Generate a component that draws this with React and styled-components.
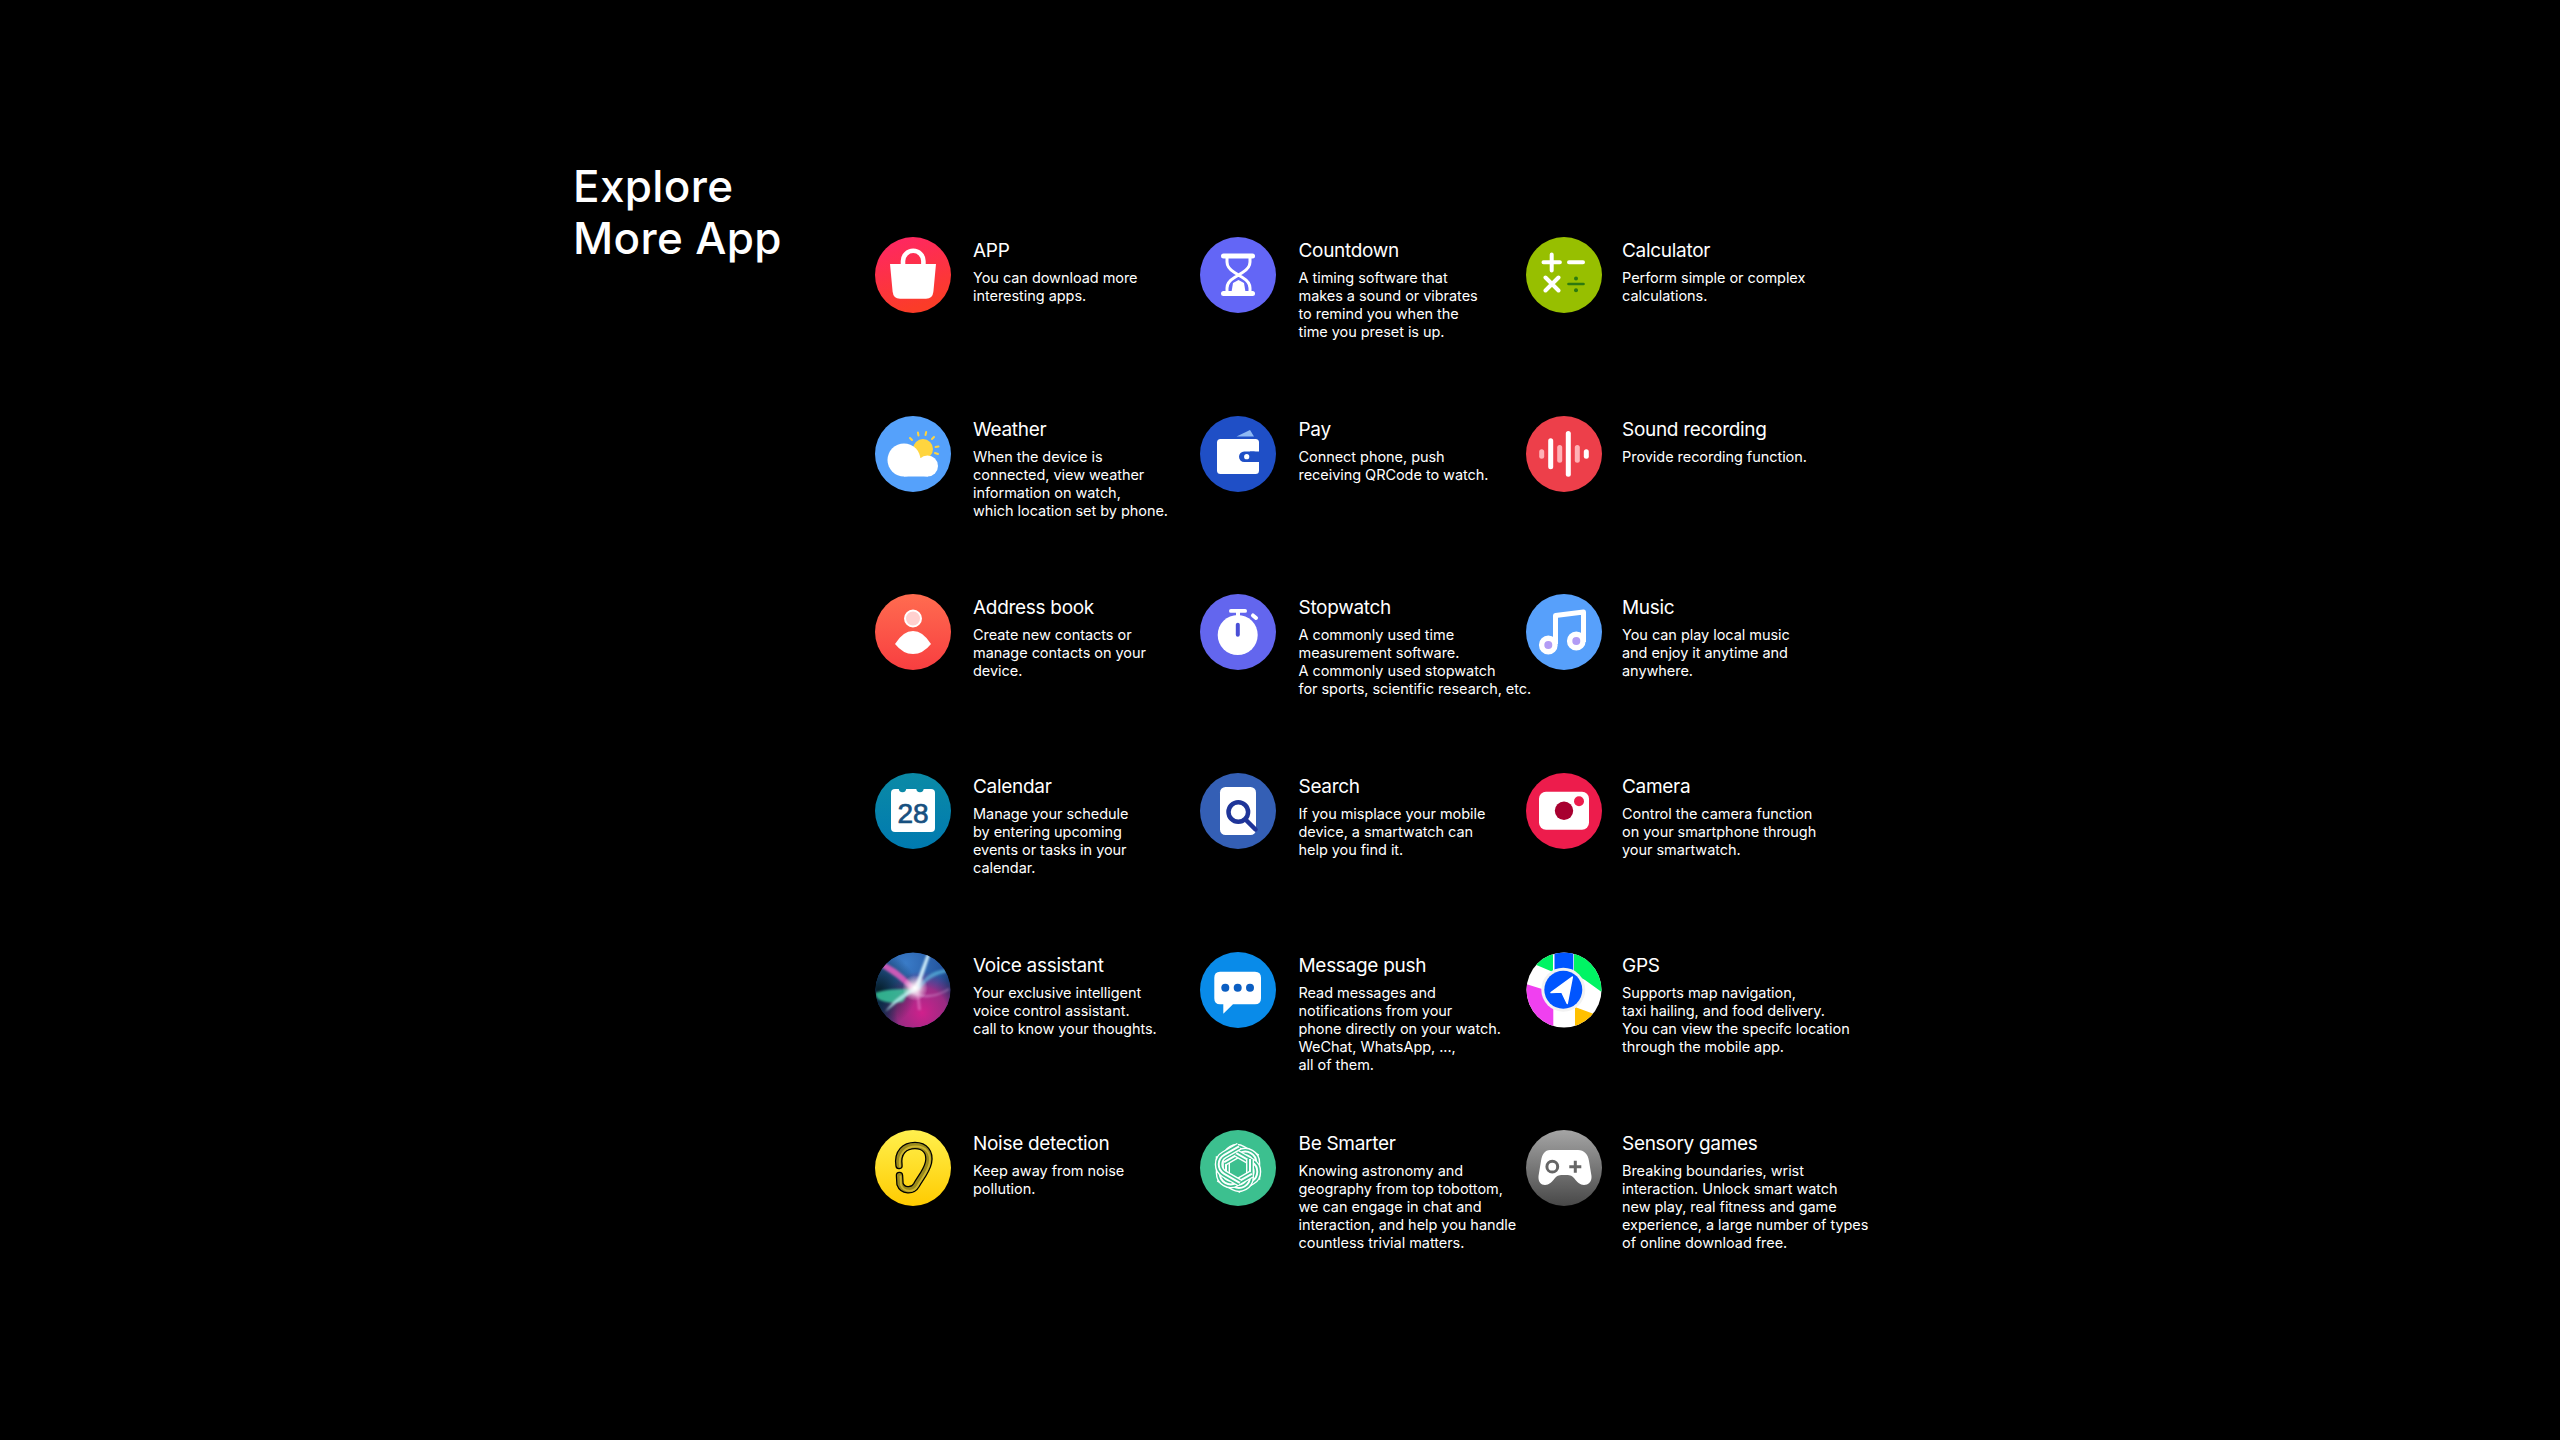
import { createGlobalStyle } from 'styled-components';
import styled from 'styled-components';

const GlobalStyle = createGlobalStyle`
  html, body {
    background: #000;
    margin: 0;
  }
`;

const Page = styled.main`
  background: #000;
  box-sizing: border-box;
  color: #fff;
  display: flex;
  font-family: Inter, 'Liberation Sans', sans-serif;
  height: 1440px;
  padding: 160px 0 0 573px;
  width: 2560px;
`;

const Heading = styled.h1`
  font-size: 44px;
  font-weight: 500;
  letter-spacing: 0.35px;
  line-height: 52px;
  margin: 0;
  width: 302px;
`;

const Grid = styled.section`
  display: grid;
  grid-auto-rows: 178.7px;
  grid-template-columns: 325px 326px 340px;
  padding-top: 77px;
`;

const Item = styled.article`
  align-items: flex-start;
  display: flex;
  gap: ${(props) => props.$gap}px;
`;

const IconBox = styled.svg`
  display: block;
  flex: none;
  height: 76px;
  width: 76px;
`;

const Title = styled.h2`
  font-size: 19px;
  font-weight: 400;
  letter-spacing: -0.3px;
  line-height: 24px;
  margin: 2px 0 6px;
`;

const Desc = styled.p`
  font-size: 14.5px;
  font-weight: 400;
  letter-spacing: -0.05px;
  line-height: 18px;
  margin: 0;
  white-space: pre;
`;

const Disc = ({ id, from, to, x2 = 0 }) => (
  <>
    <defs>
      <linearGradient id={id} x1='0' y1='0' x2={x2} y2='1'>
        <stop offset='0' stopColor={from} />
        <stop offset='1' stopColor={to} />
      </linearGradient>
    </defs>
    <circle cx='38' cy='38' r='38' fill={`url(#${id})`} />
  </>
);

const AppIcon = () => (
  <IconBox viewBox='0 0 76 76'>
    <Disc id='g-app' from='#ff2568' to='#fb3c28' x2='0.3' />
    <path d='M28 28v-4a10.2 10.2 0 0 1 20.4 0v4' fill='none' stroke='#fff' strokeWidth='4.6' />
    <path d='M15 27h46l-2.6 27.5q-.7 7.3-7.4 7.3H25q-6.700 0-7.400-7.300z' fill='#fff' />
  </IconBox>
);

const WeatherIcon = () => (
  <IconBox viewBox='0 0 76 76'>
    <circle cx='38' cy='38' r='38' fill='#55a1fb' />
    <circle cx='48' cy='33' r='10' fill='#ffd53f' />
    <path d='M37 24l-2-2M43.500 19.500l-.6-3M50.500 19l.7-3M57 23l2-2M60.500 31l3-.6M60 37l3 1' stroke='#ffd53f' strokeWidth='2' strokeLinecap='round' />
    <circle cx='29' cy='44' r='16.500' fill='#fff' />
    <circle cx='52.500' cy='50' r='10.500' fill='#fff' />
    <rect x='29' y='42' width='24' height='18.500' fill='#fff' />
  </IconBox>
);

const AddressIcon = () => (
  <IconBox viewBox='0 0 76 76'>
    <Disc id='g-address' from='#ff6c50' to='#f83e40' />
    <circle cx='38' cy='24.500' r='8' fill='#ffd0cf' stroke='#fff' strokeWidth='2' />
    <path d='M20 50q8-13 18-13t18 13q-8 10-18 10t-18-10z' fill='#fff' />
  </IconBox>
);

const CalendarNum = styled.text`
  fill: #17507f;
  font-family: 'Liberation Sans', sans-serif;
  font-size: 28px;
  font-weight: 400;
  stroke: #17507f;
  stroke-width: 0.7px;
  text-anchor: middle;
`;

const CalendarIcon = () => (
  <IconBox viewBox='0 0 76 76'>
    <Disc id='g-calendar' from='#0b8aa6' to='#007ab0' />
    <rect x='16' y='16' width='44' height='43' rx='4' fill='#fff' />
    <circle cx='27.500' cy='15.500' r='3.700' fill='#0a89a7' />
    <circle cx='45' cy='15.500' r='3.700' fill='#0a89a7' />
    <CalendarNum x='38' y='49.500'>28</CalendarNum>
  </IconBox>
);

const VoiceIcon = () => (
  <IconBox viewBox='0 0 76 76'>
    <defs>
      <radialGradient id='g-siri-a' cx='0.4' cy='0.15' r='0.7'>
        <stop offset='0' stopColor='#3a7cc8' />
        <stop offset='0.7' stopColor='#24559f' />
        <stop offset='1' stopColor='#16305e' />
      </radialGradient>
      <radialGradient id='g-siri-b' cx='0.62' cy='0.8' r='0.55'>
        <stop offset='0' stopColor='#d0208c' />
        <stop offset='0.6' stopColor='#a82a86' stopOpacity='0.9' />
        <stop offset='1' stopColor='#7a2a80' stopOpacity='0' />
      </radialGradient>
      <radialGradient id='g-siri-c' cx='0.05' cy='0.5' r='0.5'>
        <stop offset='0' stopColor='#06202c' />
        <stop offset='1' stopColor='#06202c' stopOpacity='0' />
      </radialGradient>
      <radialGradient id='g-siri-d' cx='0.5' cy='0.5' r='0.5'>
        <stop offset='0' stopColor='#fff' />
        <stop offset='0.35' stopColor='#fff' stopOpacity='0.7' />
        <stop offset='1' stopColor='#fff' stopOpacity='0' />
      </radialGradient>
      <filter id='f-siri'>
        <feGaussianBlur stdDeviation='0.8' />
      </filter>
      <clipPath id='c-siri'>
        <circle cx='38' cy='38' r='37.500' />
      </clipPath>
    </defs>
    <g clipPath='url(#c-siri)'>
      <circle cx='38' cy='38' r='38' fill='url(#g-siri-a)' />
      <circle cx='38' cy='38' r='38' fill='url(#g-siri-b)' />
      <circle cx='38' cy='38' r='38' fill='url(#g-siri-c)' />
      <g filter='url(#f-siri)'>
        <path d='M6 15l3-4c10 3 22 14 32 25l-4 3C27 29 16 21 6 15z' fill='#e85cc0' opacity='0.85' />
        <path d='M0 41c10-4 24-4 36-4L28 50C18 52 6 50 2 46z' fill='#3cd0a0' opacity='0.8' />
        <path d='M10 60c8-12 20-20 32-26l3 3C32 43 20 52 10 60z' fill='#b8f0f0' opacity='0.8' />
        <path d='M52 2l3 1L44 36l-5 0z' fill='#d8f6ff' opacity='0.9' />
        <path d='M42 35c8-12 20-18 32-18v3C60 22 52 28 44 38z' fill='#64c8e8' opacity='0.6' />
        <path d='M38 38c10 8 24 6 36-2v2C60 46 46 48 36 41z' fill='#e0b8e8' opacity='0.4' />
        <path d='M40 30l4 8 2 20-3 0z' fill='#e880c8' opacity='0.55' />
      </g>
      <circle cx='40' cy='36' r='13' fill='url(#g-siri-d)' />
    </g>
  </IconBox>
);

const earLine = 'M24 35.500C22 22 30 15.500 40 15.500c10 0 15.500 7 13.500 17-2 9-8.500 16-12 22.500-4 7-14 6-16.500-1l-.5-8.500';

const NoiseIcon = () => (
  <IconBox viewBox='0 0 76 76'>
    <Disc id='g-noise' from='#fff04e' to='#ffcb00' />
    <g fill='none' strokeLinecap='round' strokeLinejoin='round'>
      <path d={earLine} stroke='#000' strokeWidth='7.500' />
      <path d={earLine} stroke='#9a8a1c' strokeWidth='5' />
      <path d={earLine} stroke='#cdb52c' strokeWidth='1.800' transform='translate(1 1)' />
    </g>
  </IconBox>
);

const CountdownIcon = () => (
  <IconBox viewBox='0 0 76 76'>
    <circle cx='38' cy='38' r='38' fill='#6366f6' />
    <rect x='21' y='16.500' width='34' height='5' rx='2.500' fill='#fff' />
    <rect x='21' y='54' width='34' height='5' rx='2.500' fill='#fff' />
    <path d='M27 20v5q0 6 7.500 10.500l4 2.500-4 2.500Q27 45 27 51v4M50 20v5q0 6-7.500 10.500l-4 2.500 4 2.500Q50 45 50 51v4' fill='none' stroke='#fff' strokeWidth='3' />
    <path d='M31.500 55l1.500-9 5.500-3 5.500 3 1.500 9z' fill='#fff' />
  </IconBox>
);

const PayIcon = () => (
  <IconBox viewBox='0 0 76 76'>
    <circle cx='38' cy='38' r='38' fill='#1f4fc6' />
    <path d='M36.500 20.500L50 14l4 6.500z' fill='#8eb9f4' />
    <rect x='17' y='23' width='42' height='35' rx='3.500' fill='#fff' />
    <rect x='39' y='35.500' width='20' height='10.500' rx='5.200' fill='#1f4fc6' />
    <rect x='50' y='35.500' width='9.500' height='10.500' fill='#1f4fc6' />
    <circle cx='46.700' cy='40.700' r='2.600' fill='#fff' />
  </IconBox>
);

const StopwatchIcon = () => (
  <IconBox viewBox='0 0 76 76'>
    <circle cx='38' cy='38' r='38' fill='#6366ee' />
    <rect x='29' y='15' width='18' height='3.800' rx='1.900' fill='#fff' />
    <rect x='36' y='17' width='4' height='6' fill='#fff' />
    <rect x='50.500' y='20.700' width='8' height='4' rx='2' fill='#fff' transform='rotate(40 54.500 22.700)' />
    <circle cx='37.700' cy='41' r='20' fill='#fff' />
    <rect x='35.800' y='28.700' width='4' height='14' rx='2' fill='#4a4fd6' />
  </IconBox>
);

const SearchIcon = () => (
  <IconBox viewBox='0 0 76 76'>
    <circle cx='38' cy='38' r='38' fill='#345fb5' />
    <rect x='20' y='14' width='36' height='48' rx='5.500' fill='#fff' />
    <circle cx='38.300' cy='39' r='9.800' fill='none' stroke='#1f3599' strokeWidth='4.500' />
    <path d='M46 47l9.500 9.500' stroke='#1f3599' strokeWidth='4.500' strokeLinecap='round' />
  </IconBox>
);

const MessageIcon = () => (
  <IconBox viewBox='0 0 76 76'>
    <circle cx='38' cy='38' r='38' fill='#098be9' />
    <path d='M20 19.700h35q6 0 6 6v20.600q0 6-6 6H33l-9.700 9.400v-9.400H20q-5.700 0-5.700-6V25.700q0-6 5.700-6z' fill='#fff' />
    <circle cx='25.300' cy='35.700' r='4' fill='#0b5ec2' />
    <circle cx='37.700' cy='35.700' r='4' fill='#0b5ec2' />
    <circle cx='50' cy='35.700' r='4' fill='#0b5ec2' />
  </IconBox>
);

const lobe = 'M-12 9V-9A11 11 0 0 1 4.500-18.500L19.200-10';
const lobeAngles = [0, 60, 120, 180, 240, 300];

const SmarterIcon = () => (
  <IconBox viewBox='0 0 76 76'>
    <circle cx='38' cy='38' r='38' fill='#3cc08f' />
    <g transform='translate(38 38)' fill='none'>
      {lobeAngles.map((angle) => (
        <g key={angle} transform={`rotate(${angle})`}>
          <path d={lobe} stroke='#fff' strokeWidth='8' />
          <path d={lobe} stroke='#3cc08f' strokeWidth='5.200' />
          <path d={lobe} stroke='#fff' strokeWidth='2' />
        </g>
      ))}
    </g>
  </IconBox>
);

const CalculatorIcon = () => (
  <IconBox viewBox='0 0 76 76'>
    <circle cx='38' cy='38' r='38' fill='#97bf00' />
    <g fill='none' stroke='#fff' strokeWidth='4' strokeLinecap='round'>
      <path d='M17.500 25.300h16.400M25.700 17.500v16M43 25.300h14M19.500 40.500l13 13M32.500 40.500l-13 13' />
    </g>
    <path d='M42.500 47h15' stroke='#2d7a0f' strokeWidth='2.600' strokeLinecap='round' />
    <circle cx='50' cy='41.500' r='2' fill='#2d7a0f' />
    <circle cx='50' cy='53.300' r='2' fill='#2d7a0f' />
  </IconBox>
);

const bars = [
  { x: 15.7, y1: 33.3, y2: 42.7, light: true },
  { x: 24.7, y1: 22.3, y2: 53.3 },
  { x: 33.7, y1: 29, y2: 46.7, light: true },
  { x: 42.3, y1: 15, y2: 60.7 },
  { x: 51.3, y1: 29, y2: 46.7, light: true },
  { x: 60.3, y1: 33.3, y2: 42.7 },
];

const SoundIcon = () => (
  <IconBox viewBox='0 0 76 76'>
    <circle cx='38' cy='38' r='38' fill='#ed3f4a' />
    {bars.map((bar) => (
      <rect
        key={bar.x}
        x={bar.x - 2.5}
        y={bar.y1}
        width='5'
        height={bar.y2 - bar.y1}
        rx='2.500'
        fill={bar.light ? '#ffb2b6' : '#fff'}
      />
    ))}
  </IconBox>
);

const MusicIcon = () => (
  <IconBox viewBox='0 0 76 76'>
    <circle cx='38' cy='38' r='38' fill='#57a0fb' />
    <path d='M29.500 50V21.500L57.500 18v30' fill='none' stroke='#fff' strokeWidth='5' strokeLinejoin='round' />
    <circle cx='22.300' cy='51' r='6.700' fill='#b29cf5' stroke='#fff' strokeWidth='5.400' />
    <circle cx='50.300' cy='47' r='6.700' fill='#b29cf5' stroke='#fff' strokeWidth='5.400' />
  </IconBox>
);

const CameraIcon = () => (
  <IconBox viewBox='0 0 76 76'>
    <circle cx='38' cy='38' r='38' fill='#ed1c4c' />
    <rect x='13' y='18.700' width='50' height='38' rx='7' fill='#fff' />
    <circle cx='38' cy='37.700' r='9.200' fill='#a80030' />
    <circle cx='53' cy='28.300' r='5' fill='#ed1c4c' />
  </IconBox>
);

const GpsIcon = () => (
  <IconBox viewBox='0 0 76 76'>
    <defs>
      <clipPath id='c-gps'>
        <circle cx='38' cy='38' r='37.500' />
      </clipPath>
    </defs>
    <g clipPath='url(#c-gps)'>
      <rect width='76' height='76' fill='#fff' />
      <path d='M27 0v20L8 12 14 0z' fill='#00f464' />
      <rect x='28.500' y='0' width='18.800' height='24' fill='#0055ff' />
      <path d='M48 0h32v43L59 28l-11-6z' fill='#00f464' />
      <path d='M0 32l16 5 11.300 13v30H0z' fill='#f040f0' />
      <path d='M49 55l19 7 8 18H49z' fill='#ffc000' />
    </g>
    <circle cx='37.300' cy='37.700' r='22' fill='#f2f2f2' />
    <circle cx='37.300' cy='37.700' r='19' fill='#0055ff' />
    <path d='M46.300 25L25 40.500l10.700-.5 5.500 11.500z' fill='#fff' stroke='#fff' strokeWidth='1.500' strokeLinejoin='round' />
  </IconBox>
);

const GameIcon = () => (
  <IconBox viewBox='0 0 76 76'>
    <Disc id='g-game' from='#a5a5a5' to='#484848' />
    <path d='M24 20h28c6 0 10 4 11 11l2.500 15c.5 6-3.500 9-7.500 9s-7-3-10-7c-3-3-4-3-9.500-3s-6.500 0-9.500 3c-3 4-6 7-10 7s-7-3-6.500-9L15 31c1-7 4-11 9-11z' fill='#fff' />
    <circle cx='26.300' cy='36.700' r='5.400' fill='none' stroke='#666' strokeWidth='3' />
    <path d='M43.300 36.700h12M49.300 30.700v12' stroke='#666' strokeWidth='3' />
  </IconBox>
);

const rows = [
  [
    { icon: AppIcon, title: 'APP', lines: ['You can download more', 'interesting apps.'] },
    { icon: CountdownIcon, title: 'Countdown', lines: ['A timing software that', 'makes a sound or vibrates', 'to remind you when the', 'time you preset is up.'] },
    { icon: CalculatorIcon, title: 'Calculator', lines: ['Perform simple or complex', 'calculations.'] },
  ],
  [
    { icon: WeatherIcon, title: 'Weather', lines: ['When the device is', 'connected, view weather', 'information on watch,', 'which location set by phone.'] },
    { icon: PayIcon, title: 'Pay', lines: ['Connect phone, push', 'receiving QRCode to watch.'] },
    { icon: SoundIcon, title: 'Sound recording', lines: ['Provide recording function.'] },
  ],
  [
    { icon: AddressIcon, title: 'Address book', lines: ['Create new contacts or', 'manage contacts on your', 'device.'] },
    { icon: StopwatchIcon, title: 'Stopwatch', lines: ['A commonly used time', 'measurement software.', 'A commonly used stopwatch', 'for sports, scientific research, etc.'] },
    { icon: MusicIcon, title: 'Music', lines: ['You can play local music', 'and enjoy it anytime and', 'anywhere.'] },
  ],
  [
    { icon: CalendarIcon, title: 'Calendar', lines: ['Manage your schedule', 'by entering upcoming', 'events or tasks in your', 'calendar.'] },
    { icon: SearchIcon, title: 'Search', lines: ['If you misplace your mobile', 'device, a smartwatch can', 'help you find it.'] },
    { icon: CameraIcon, title: 'Camera', lines: ['Control the camera function', 'on your smartphone through', 'your smartwatch.'] },
  ],
  [
    { icon: VoiceIcon, title: 'Voice assistant', lines: ['Your exclusive intelligent', 'voice control assistant.', 'call to know your thoughts.'] },
    { icon: MessageIcon, title: 'Message push', lines: ['Read messages and', 'notifications from your', 'phone directly on your watch.', 'WeChat, WhatsApp, ...,', 'all of them.'] },
    { icon: GpsIcon, title: 'GPS', lines: ['Supports map navigation,', 'taxi hailing, and food delivery.', 'You can view the specifc location', 'through the mobile app.'] },
  ],
  [
    { icon: NoiseIcon, title: 'Noise detection', lines: ['Keep away from noise', 'pollution.'] },
    { icon: SmarterIcon, title: 'Be Smarter', lines: ['Knowing astronomy and', 'geography from top tobottom,', 'we can engage in chat and', 'interaction, and help you handle', 'countless trivial matters.'] },
    { icon: GameIcon, title: 'Sensory games', lines: ['Breaking boundaries, wrist', 'interaction. Unlock smart watch', 'new play, real fitness and game', 'experience, a large number of types', 'of online download free.'] },
  ],
];

const columnGaps = [22, 22.5, 20];

const App = () => {
  return (
    <Page>
      <GlobalStyle />
      <Heading>
        Explore
        <br />
        More App
      </Heading>
      <Grid>
        {rows.flatMap((row) =>
          row.map(({ icon: Icon, title, lines }, column) => (
            <Item key={title} $gap={columnGaps[column]}>
              <Icon />
              <div>
                <Title>{title}</Title>
                <Desc>{lines.join('\n')}</Desc>
              </div>
            </Item>
          )),
        )}
      </Grid>
    </Page>
  );
};

export default App;
